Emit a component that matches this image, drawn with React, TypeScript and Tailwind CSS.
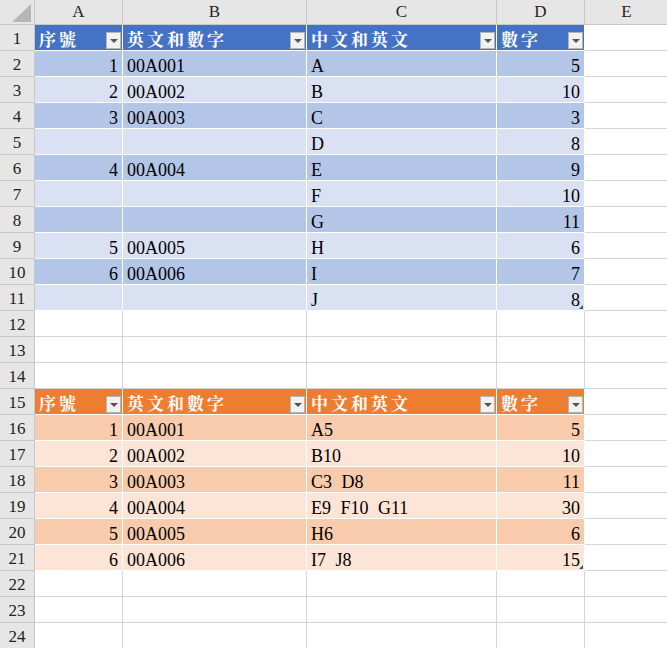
type Cell = string;

const table1: Cell[][] = [
  ["1", "00A001", "A", "5"],
  ["2", "00A002", "B", "10"],
  ["3", "00A003", "C", "3"],
  ["", "", "D", "8"],
  ["4", "00A004", "E", "9"],
  ["", "", "F", "10"],
  ["", "", "G", "11"],
  ["5", "00A005", "H", "6"],
  ["6", "00A006", "I", "7"],
  ["", "", "J", "8"],
];

const table2: Cell[][] = [
  ["1", "00A001", "A5", "5"],
  ["2", "00A002", "B10", "10"],
  ["3", "00A003", "C3 D8", "11"],
  ["4", "00A004", "E9 F10 G11", "30"],
  ["5", "00A005", "H6", "6"],
  ["6", "00A006", "I7 J8", "15"],
];

const headers = ["序號", "英文和數字", "中文和英文", "數字"];
const widths = ["w-[88px]", "w-[184px]", "w-[190px]", "w-[88px]"];

function RowHead({ n }: { n: number }) {
  return (
    <div className="w-[35px] shrink-0 bg-[#e6e6e6] border-r border-b border-[#c8c8c8] flex items-end justify-center leading-[20px] text-[17px] text-[#222] pb-[1px]">
      {n}
    </div>
  );
}

function Filter() {
  return (
    <div className="absolute right-[1px] bottom-[1px] w-[15px] h-[17px] bg-[#f2f2f2] border border-[#b4b4b4] flex items-center justify-center">
      <div className="w-0 h-0 border-l-[4px] border-r-[4px] border-t-[4px] border-l-transparent border-r-transparent border-t-[#555]" />
    </div>
  );
}

function ECell() {
  return <div className="w-[84px] shrink-0 border-r border-b border-[#d4d4d4]" />;
}

function HeaderRow({ n, color }: { n: number; color: string }) {
  return (
    <div className="flex h-[26px]">
      <RowHead n={n} />
      {headers.map((h, i) => (
        <div
          key={i}
          className={`${widths[i]} ${color} shrink-0 relative border-r border-b border-white flex items-end pl-[4px] pb-[1px] leading-[20px] text-white font-bold text-[17px] tracking-[3px] font-[family-name:Noto_Serif_CJK_TC,Noto_Sans_CJK_TC,serif]`}
        >
          {h}
          <Filter />
        </div>
      ))}
      <ECell />
    </div>
  );
}

function DataRow({ n, cells, bg, last }: { n: number; cells: Cell[]; bg: string; last?: boolean }) {
  return (
    <div className="flex h-[26px]">
      <RowHead n={n} />
      {cells.map((c, i) => {
        const right = i === 0 || i === 3;
        return (
          <div
            key={i}
            className={`${widths[i]} ${bg} shrink-0 relative border-r border-b border-white flex items-end leading-[20px] whitespace-pre [word-spacing:5px] ${right ? "justify-end pr-[4px]" : "pl-[4px]"}`}
          >
            {c}
            {last && i === 3 && (
              <span className="absolute right-[1px] bottom-[1px] w-[4px] h-[4px] bg-[#2f5597] [clip-path:polygon(100%_0,100%_100%,0_100%)]" />
            )}
          </div>
        );
      })}
      <ECell />
    </div>
  );
}

function EmptyRow({ n }: { n: number }) {
  return (
    <div className="flex h-[26px]">
      <RowHead n={n} />
      {widths.map((w, i) => (
        <div key={i} className={`${w} shrink-0 border-r border-b border-[#d4d4d4]`} />
      ))}
      <ECell />
    </div>
  );
}

export default function App() {
  return (
    <div className="w-[667px] h-[648px] overflow-hidden bg-white text-black text-[18px] font-[family-name:Liberation_Serif,Noto_Sans_CJK_TC,serif]">
      <div className="flex h-[25px]">
        <div className="w-[35px] shrink-0 bg-[#e6e6e6] border-r border-b border-[#c8c8c8] flex items-end justify-end pr-[3px] pb-[2px]">
          <svg width="19" height="18" viewBox="0 0 19 18">
            <polygon points="19,0 19,18 0,18" fill="#b5b5b5" />
          </svg>
        </div>
        {["A", "B", "C", "D"].map((l, i) => (
          <div
            key={l}
            className={`${widths[i]} shrink-0 bg-[#e6e6e6] border-r border-b border-[#c8c8c8] flex items-center justify-center text-[17px] text-[#222]`}
          >
            {l}
          </div>
        ))}
        <div className="w-[84px] shrink-0 bg-[#e6e6e6] border-r border-b border-[#c8c8c8] flex items-center justify-center text-[17px] text-[#222]">
          E
        </div>
      </div>

      <HeaderRow n={1} color="bg-[#4472c4]" />
      {table1.map((r, i) => (
        <DataRow
          key={i}
          n={i + 2}
          cells={r}
          bg={i % 2 === 0 ? "bg-[#b4c6e7]" : "bg-[#d9e1f2]"}
          last={i === table1.length - 1}
        />
      ))}
      <EmptyRow n={12} />
      <EmptyRow n={13} />
      <EmptyRow n={14} />
      <HeaderRow n={15} color="bg-[#ed7d31]" />
      {table2.map((r, i) => (
        <DataRow
          key={i}
          n={i + 16}
          cells={r}
          bg={i % 2 === 0 ? "bg-[#f8cbad]" : "bg-[#fce4d6]"}
          last={i === table2.length - 1}
        />
      ))}
      <EmptyRow n={22} />
      <EmptyRow n={23} />
      <EmptyRow n={24} />
    </div>
  );
}
